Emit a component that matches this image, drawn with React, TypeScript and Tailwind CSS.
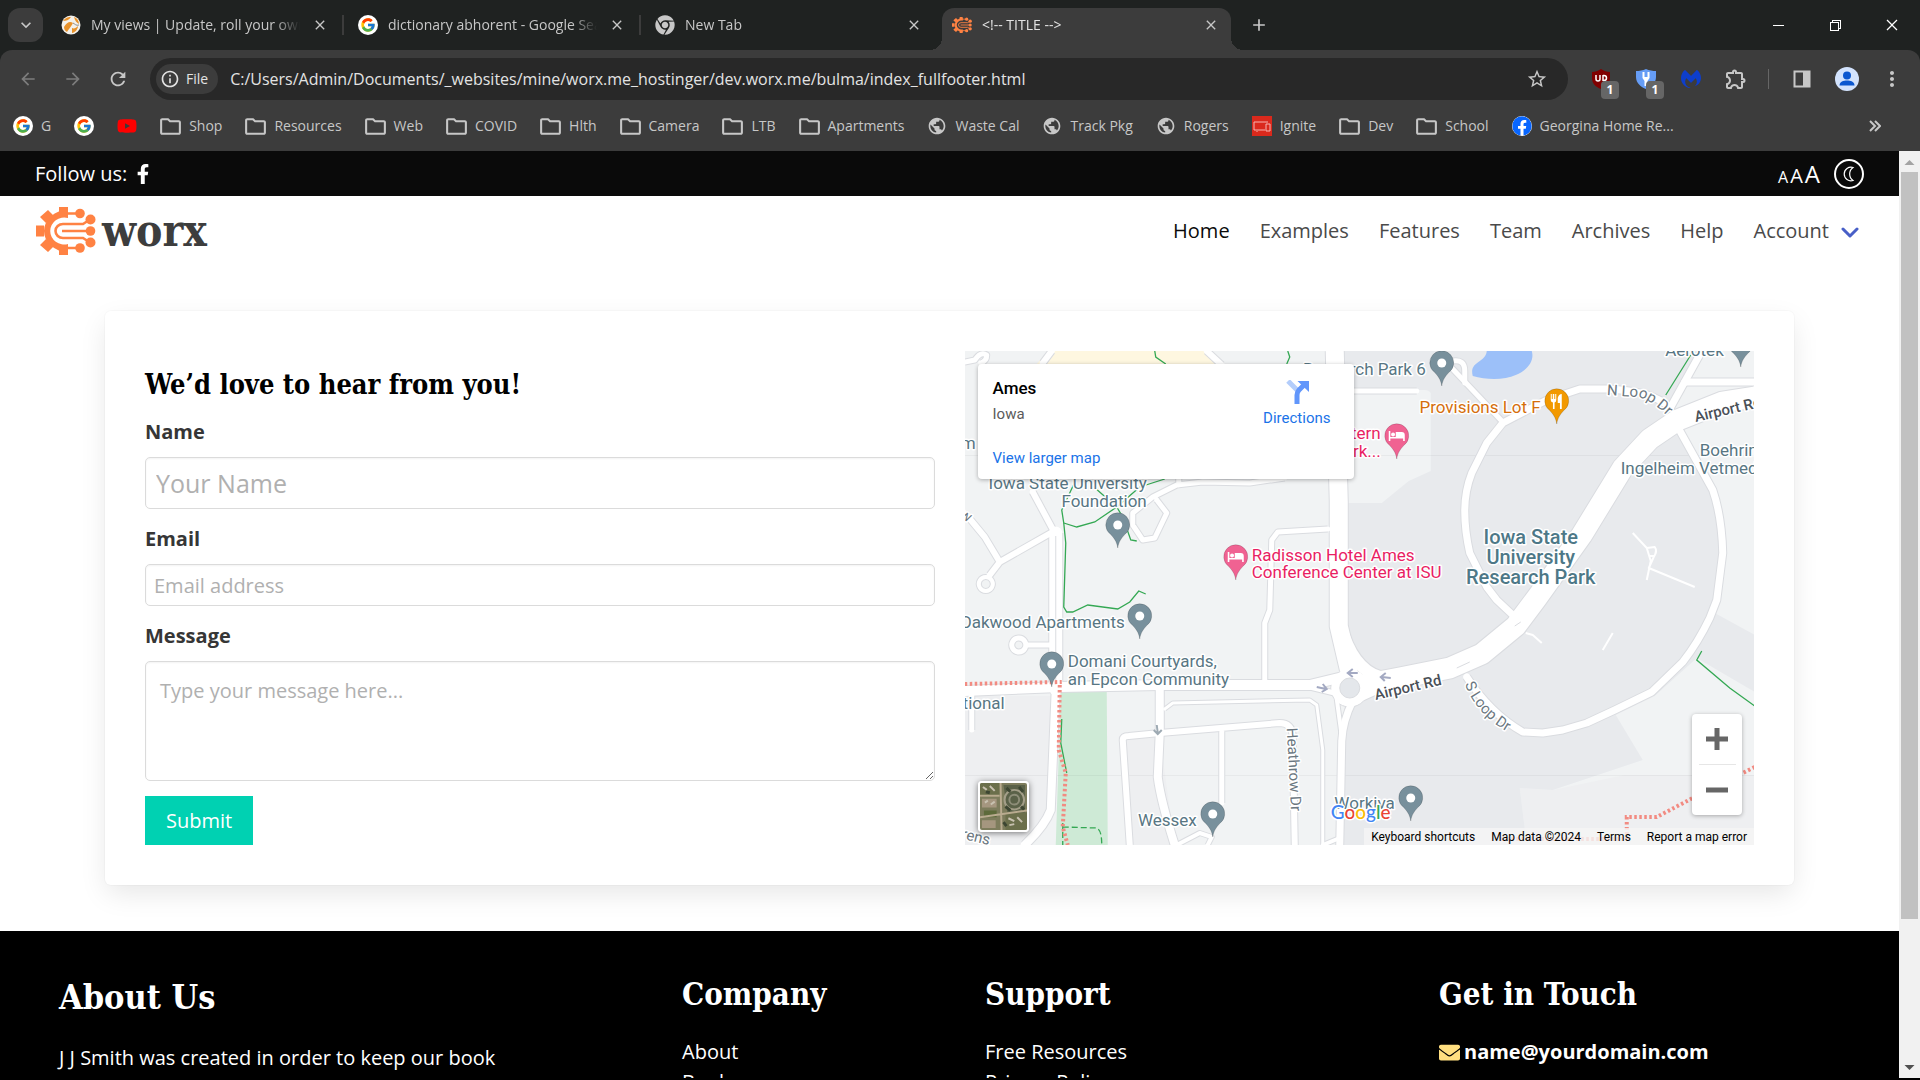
import type { ReactNode } from "react";
import {
  MdArrowBack,
  MdArrowForward,
  MdClose,
  MdExpandMore,
  MdInfoOutline,
  MdMoreVert,
  MdAdd,
  MdOutlineExtension,
  MdOutlineFolder,
  MdPublic,
  MdRefresh,
  MdStarOutline,
} from "react-icons/md";
import { FcGoogle } from "react-icons/fc";
import { FaChrome, FaEnvelope, FaFacebook, FaFacebookF, FaYoutube } from "react-icons/fa";
import { VscChromeClose, VscChromeMinimize, VscChromeRestore } from "react-icons/vsc";
import { SiMalwarebytes } from "react-icons/si";
import { clsx } from "clsx";

/* ---------- logos ---------- */

function GearLogo({ className }: { className?: string }) {
  return (
    <svg viewBox="0 0 60 48" className={className} fill="#ff8243" aria-hidden="true">
      <path d="M32 3A24 21 0 1 0 32 45V37A14 13.500 0 1 1 32 11Z" />
      <path d="M23 0h9v8h-9zM23 40h9v8h-9zM0 18.500h8v11H0z" />
      <path d="M4 10l8-7 6 6-8 7zM4 38l8 7 6-6-8-7z" />
      <g fill="none" stroke="#ff8243" strokeWidth="2.6">
        <path d="M30 6.500H44M30 41H44M26 24H54" />
        <path d="M54 12.500L47 17H27A7.500 7 0 0 0 27 31H47L54 35.500" />
      </g>
      <circle cx="44" cy="6.500" r="4.800" />
      <circle cx="44" cy="41" r="4.800" />
      <circle cx="54.500" cy="12.500" r="5" />
      <circle cx="54.500" cy="24" r="4.800" />
      <circle cx="54.500" cy="35.500" r="5" />
    </svg>
  );
}

function GoogleDot() {
  return (
    <span className="flex size-5 shrink-0 items-center justify-center rounded-full bg-white">
      <FcGoogle className="size-4" />
    </span>
  );
}

function BallIcon() {
  return (
    <svg viewBox="0 0 20 20" className="size-5 shrink-0">
      <circle cx="10" cy="10" r="9.500" fill="#f4f1ea" />
      <path d="M2 6c3-4 6-4 8-4-2 3-5 4-8 4zM3 12c3-5 6-6 9-4-2 4-5 7-6 9-2-1-3-3-3-5zM13 2c3 1 5 4 5 7-2-1-4-3-5-7zM11 13c2 1 4 0 6-2 0 3-3 7-6 7z" fill="#e8922a" />
      <path d="M12 8c2 1 3 3 6 2" stroke="#8b8b8b" fill="none" />
    </svg>
  );
}

/* ---------- browser window ---------- */

const TABS = [
  { title: "My views | Update, roll your own", icon: <BallIcon /> },
  { title: "dictionary abhorent - Google Search", icon: <GoogleDot /> },
  { title: "New Tab", icon: <FaChrome className="size-5 shrink-0 text-[#c7c7c7]" /> },
  { title: "<!-- TITLE -->", icon: <GearLogo className="h-4 w-5 shrink-0" />, active: true },
];

const FOOT =
  "absolute bottom-0 size-3 bg-[radial-gradient(circle_at_0_0,transparent_12px,#3c3c3c_12px)]";

function TabStrip() {
  return (
    <div className="flex h-[50px] shrink-0 items-center bg-[#1f2221] text-[#c7c7c7]">
      <button aria-label="Search tabs" className="ml-2 mr-1 flex h-[34px] w-[35px] items-center justify-center rounded-xl bg-[#3c3c3c]">
        <MdExpandMore className="size-5" />
      </button>
      {TABS.map((tab, i) => (
        <div
          key={tab.title}
          className={clsx(
            "relative flex h-full w-[297px] items-center",
            i < 2 && "after:absolute after:right-0 after:h-5 after:w-0.5 after:bg-[#3c3c3c]",
          )}
        >
          {tab.active && (
            <div className="absolute inset-x-1 bottom-0 top-2 rounded-t-xl bg-[#3c3c3c]">
              <span className={clsx(FOOT, "-left-3")} />
              <span className={clsx(FOOT, "-right-3 -scale-x-100")} />
            </div>
          )}
          <div className="relative flex w-full items-center gap-2.5 px-3.5">
            {tab.icon}
            <span
              className={clsx(
                "w-[210px] overflow-hidden whitespace-nowrap text-sm [mask-image:linear-gradient(to_right,black_88%,transparent)]",
                tab.active && "text-[#e3e3e3]",
              )}
            >
              {tab.title}
            </span>
            <button aria-label="Close tab" className="ml-auto flex size-5 shrink-0 items-center justify-center">
              <MdClose className="size-4" />
            </button>
          </div>
        </div>
      ))}
      <button aria-label="New tab" className="ml-3 flex size-6 items-center justify-center">
        <MdAdd className="size-5" />
      </button>
      <div className="ml-auto flex h-full text-white">
        <button aria-label="Minimize" className="flex w-[57px] items-center justify-center">
          <VscChromeMinimize className="size-4" />
        </button>
        <button aria-label="Restore" className="flex w-[57px] items-center justify-center">
          <VscChromeRestore className="size-4" />
        </button>
        <button aria-label="Close" className="flex w-[57px] items-center justify-center">
          <VscChromeClose className="size-4" />
        </button>
      </div>
    </div>
  );
}

function ToolButton({ label, children }: { label: string; children: ReactNode }) {
  return (
    <button aria-label={label} className="relative flex h-10 w-[45px] items-center justify-center">
      {children}
    </button>
  );
}

function CountBadge() {
  return (
    <span className="absolute bottom-0 right-1 flex h-[18px] w-[18px] items-center justify-center rounded bg-[#666] text-xs font-bold text-white">
      1
    </span>
  );
}

function Toolbar() {
  return (
    <div className="shrink-0 bg-[#1f2221]">
      <div className="flex h-[58px] items-center rounded-t-xl bg-[#3c3c3c] pl-[5px] pr-1.5 text-[#c7c7c7]">
        <ToolButton label="Back">
          <MdArrowBack className="size-5 text-[#7c7c7c]" />
        </ToolButton>
        <ToolButton label="Forward">
          <MdArrowForward className="size-5 text-[#7c7c7c]" />
        </ToolButton>
        <ToolButton label="Reload">
          <MdRefresh className="size-[22px]" />
        </ToolButton>
        <div className="ml-2.5 flex h-[42px] min-w-0 flex-1 items-center rounded-full bg-[#282828] pl-1.5 pr-5">
          <span className="flex h-[30px] items-center gap-1.5 rounded-full bg-[#3c3c3c] pl-1 pr-2.5 text-sm font-medium text-[#e3e3e3]">
            <MdInfoOutline className="size-5" />
            File
          </span>
          <input
            aria-label="Address"
            className="ml-3 min-w-0 flex-1 bg-transparent text-base text-[#e3e3e3] outline-none"
            defaultValue="C:/Users/Admin/Documents/_websites/mine/worx.me_hostinger/dev.worx.me/bulma/index_fullfooter.html"
          />
          <button aria-label="Bookmark this page">
            <MdStarOutline className="size-[22px]" />
          </button>
        </div>
        <div className="ml-2.5 flex items-center">
          <ToolButton label="uBlock Origin">
            <svg viewBox="0 0 20 20" className="size-5">
              <path d="M10 0c3 2 6 3 9 3v6c0 6-4 9-9 11C5 18 1 15 1 9V3c3 0 6-1 9-3z" fill="#800000" />
              <path d="M5 6v4a2 2 0 0 0 4 0V6M12 12V6M12 6.500h1a2.500 2.500 0 0 1 0 5h-1" fill="none" stroke="#fff" strokeWidth="1.500" />
            </svg>
            <CountBadge />
          </ToolButton>
          <ToolButton label="Privacy shield">
            <svg viewBox="0 0 20 20" className="size-5">
              <path d="M10 0c3 1.500 7 2 10 2v6c0 6-5 10-10 12C5 18 0 14 0 8V2c3 0 7-.500 10-2z" fill="#669df6" />
              <path d="M6.500 3v6l2 3v5h3v-5l2-3V3h-2v5h-3V3z" fill="#fff" />
            </svg>
            <CountBadge />
          </ToolButton>
          <ToolButton label="Malwarebytes">
            <SiMalwarebytes className="size-5 text-[#0d3ecc]" />
          </ToolButton>
          <ToolButton label="Extensions">
            <MdOutlineExtension className="size-6" />
          </ToolButton>
          <span className="mx-2.5 h-5 w-px bg-[#666]" />
          <ToolButton label="Side panel">
            <svg viewBox="0 0 18 18" className="size-[18px]">
              <path d="M1.500 1.500h15v15h-15z" fill="none" stroke="currentColor" strokeWidth="2" />
              <path d="M10 1h7v16h-7z" fill="currentColor" />
            </svg>
          </ToolButton>
          <ToolButton label="Profile">
            <span className="flex size-6 items-center justify-center rounded-full bg-[#d3e3fd]">
              <svg viewBox="0 0 24 24" className="size-6" fill="#0b57d0">
                <circle cx="12" cy="8.500" r="4" />
                <path d="M4.500 18.500c0-4 4-5 7.500-5s7.500 1 7.500 5z" />
              </svg>
            </span>
          </ToolButton>
          <ToolButton label="Menu">
            <MdMoreVert className="size-6" />
          </ToolButton>
        </div>
      </div>
    </div>
  );
}

const folder = <MdOutlineFolder className="-mx-0.5 size-[25px] shrink-0" />;
const globe = <MdPublic className="size-5 shrink-0" />;

const BOOKMARKS: { label: string; icon: ReactNode }[] = [
  { label: "G", icon: <GoogleDot /> },
  { label: "", icon: <GoogleDot /> },
  { label: "", icon: <FaYoutube className="size-5 shrink-0 text-[#f00]" /> },
  { label: "Shop", icon: folder },
  { label: "Resources", icon: folder },
  { label: "Web", icon: folder },
  { label: "COVID", icon: folder },
  { label: "Hlth", icon: folder },
  { label: "Camera", icon: folder },
  { label: "LTB", icon: folder },
  { label: "Apartments", icon: folder },
  { label: "Waste Cal", icon: globe },
  { label: "Track Pkg", icon: globe },
  { label: "Rogers", icon: globe },
  {
    label: "Ignite",
    icon: (
      <svg viewBox="0 0 20 20" className="size-5 shrink-0">
        <path d="M0 0h20v20H0z" fill="#da291c" />
        <path d="M13 14H2V6h14M5 15v1M14 8h4v7h-4z" fill="none" stroke="#f5b5b0" />
      </svg>
    ),
  },
  { label: "Dev", icon: folder },
  { label: "School", icon: folder },
  { label: "Georgina Home Re...", icon: <FaFacebook className="size-5 shrink-0 rounded-full bg-white text-[#0866ff]" /> },
];

function BookmarkBar() {
  return (
    <nav className="flex h-[43px] shrink-0 items-start bg-[#3c3c3c] pl-[13px] pr-[39px] text-[#c7c7c7]">
      <div className="flex h-9 min-w-0 flex-1 items-center gap-[23px] overflow-hidden">
        {BOOKMARKS.map((b, i) => (
          <a key={i} href="#" aria-label={b.label || "Bookmark"} className="flex shrink-0 items-center gap-2 text-sm">
            {b.icon}
            {b.label && <span>{b.label}</span>}
          </a>
        ))}
      </div>
      <button aria-label="More bookmarks" className="flex h-9 items-center">
        <svg viewBox="0 0 12 12" className="size-3" fill="none" stroke="currentColor" strokeWidth="2">
          <path d="M1 1l5 5-5 5M6 1l5 5-5 5" />
        </svg>
      </button>
    </nav>
  );
}

/* ---------- map ---------- */

const ROADS: { d: string; w: number }[] = [
  { d: "M68 141L90 182", w: 6 },
  { d: "M91 182V338", w: 13 },
  { d: "M91 338L86 459Q80 475 60 494", w: 8 },
  { d: "M6 169L20 186L35 211L86 182M35 211L25 224", w: 6 },
  { d: "M21 226a7 7 0 1 0 .1 0z", w: 4 },
  { d: "M0 11L10 9Q16 0 22 4Q22 10 16 12", w: 5 },
  { d: "M78 12L87 0M242 0L257 14", w: 6 },
  { d: "M54 287a7 7 0 1 0 .1 0zM62 294H88", w: 5 },
  { d: "M7 342V379", w: 5 },
  { d: "M0 340L95 336L195 334H345L378 326", w: 10 },
  { d: "M345 336L378 344", w: 5 },
  { d: "M370 0L374 150V275L384 318", w: 18 },
  { d: "M376 275Q388 318 415 326", w: 12 },
  { d: "M392 346Q412 336 430 330", w: 12 },
  { d: "M398 334L435 327L485 317L517 303L551 275L572 247L617 184L658 117L685 88L713 69L758 51L790 46", w: 21 },
  { d: "M388 350Q378 370 377 390L375 494", w: 7 },
  { d: "M372 348L377 385", w: 4 },
  { d: "M705 57Q690 40 642 38H615L582 49L538 72L522 92L507 122Q500 140 500 160Q500 180 505 202L522 236L532 249L548 264", w: 7 },
  { d: "M713 76L748 139Q757 165 758 202L752 249L745 267Q733 292 718 311L687 341L650 359L622 372L598 379L578 382L558 381Q525 362 502 326", w: 7 },
  { d: "M487 17L538 71", w: 5 },
  { d: "M488 10Q500 8 500 20V32", w: 5 },
  { d: "M379 40H452", w: 5 },
  { d: "M720 31H790", w: 7 },
  { d: "M737 0L706 56", w: 7 },
  { d: "M363 178L313 181L307 189L305 259L300 272V332", w: 5 },
  { d: "M320 127L285 132L238 131L212 134L188 146L168 162V174L178 189L190 187L202 162L192 149M214 127V134", w: 5 },
  { d: "M195 339V382L193 426Q196 450 210 494", w: 8 },
  { d: "M165 494L158 389Q158 385 164 385L195 382L315 372Q327 372 328 385L330 494", w: 6 },
  { d: "M257 381V452", w: 5 },
  { d: "M212 494L235 482L247 486L243 494", w: 4 },
  { d: "M200 358L208 352L345 349L352 354L358 399V494", w: 3 },
  { d: "M358 494L375 487", w: 4 },
];

const TRAILS = [
  "M190 0L191 6L201 13",
  "M323 0L325 6L322 13",
  "M112 127L97 159L99 172L101 192L99 256L102 261L108 261L123 254L153 258L165 251L174 240L181 243",
  "M99 172L112 176L130 171L152 156L128 135",
  "M200 128L175 136L152 156L158 166L166 189L172 190",
  "M726 4L701 44",
  "M737 300L732 309L765 337L790 355",
  "M97 368L96 392L102 422",
];

type Kind = "place" | "hotel" | "food";

const PIN_FILL: Record<Kind, string> = { place: "#78909c", hotel: "#f06292", food: "#f29900" };

const PINS: { x: number; y: number; kind: Kind }[] = [
  { x: 153, y: 174, kind: "place" },
  { x: 271, y: 206, kind: "hotel" },
  { x: 477, y: 12, kind: "place" },
  { x: 592, y: 50, kind: "food" },
  { x: 432, y: 85, kind: "hotel" },
  { x: 776, y: -7, kind: "place" },
  { x: 175, y: 265, kind: "place" },
  { x: 87, y: 313, kind: "place" },
  { x: 248, y: 463, kind: "place" },
  { x: 446, y: 447, kind: "place" },
];

function Pin({ x, y, kind }: { x: number; y: number; kind: Kind }) {
  return (
    <g transform={`translate(${x} ${y})`}>
      <path
        d="M0 23C-1 16-4 13-7 9.500A12 12 0 1 1 7 9.500C4 13 1 16 0 23Z"
        fill={PIN_FILL[kind]}
        stroke="#000"
        strokeOpacity=".15"
      />
      {kind === "place" && <circle r="4.500" fill="#fff" />}
      {kind === "hotel" && (
        <path d="M-8-5h1.600v6H-1v-5h6q3 0 3 3v6H6.400v-2.500H-6.400V5H-8zM-3.700-3.500a2 2 0 1 1 0 4 2 2 0 0 1 0-4z" fill="#fff" />
      )}
      {kind === "food" && (
        <path d="M-6-7h1v5h1v-5h1.500v5h1v-5h1v6Q-.500 1-2.200 1.500V8h-1.600V1.500Q-6 1-6-1zM5-7V8H3.200V2H1v-5q1-4 4-4z" fill="#fff" />
      )}
    </g>
  );
}

const LABELS: { x: number; y: number; text: string; end?: boolean; fill?: string }[] = [
  { x: 182, y: 138, text: "Iowa State University", end: true },
  { x: 182, y: 156, text: "Foundation", end: true },
  { x: 461, y: 24, text: "Research Park 6", end: true },
  { x: 759, y: 5, text: "Aerotek", end: true },
  { x: 735, y: 105, text: "Boehringer" },
  { x: 656, y: 123, text: "Ingelheim Vetmedica" },
  { x: 160, y: 277, text: "Oakwood Apartments", end: true },
  { x: 103, y: 316, text: "Domani Courtyards," },
  { x: 103, y: 334, text: "an Epcon Community" },
  { x: 40, y: 358, text: "National", end: true },
  { x: 232, y: 475, text: "Wessex", end: true },
  { x: 430, y: 458, text: "Workiva", end: true },
  { x: 11, y: 98, text: "m", end: true },
  { x: 287, y: 210, text: "Radisson Hotel Ames", fill: "#e91e63" },
  { x: 287, y: 227, text: "Conference Center at ISU", fill: "#e91e63" },
  { x: 416, y: 88, text: "Western", end: true, fill: "#e91e63" },
  { x: 416, y: 106, text: "Park...", end: true, fill: "#e91e63" },
  { x: 576, y: 62, text: "Provisions Lot F", end: true, fill: "#d56e0c" },
];

const GOOGLE = [
  ["G", "#4285f4"],
  ["o", "#ea4335"],
  ["o", "#fbbc04"],
  ["g", "#4285f4"],
  ["l", "#34a853"],
  ["e", "#ea4335"],
];

function MapDrawing() {
  return (
    <svg
      viewBox="0 0 790 494"
      preserveAspectRatio="xMidYMid slice"
      className="absolute inset-0 size-full font-[Roboto,sans-serif]"
      role="img"
      aria-label="Map of Ames, Iowa"
    >
      <path d="M0 0H790V494H0z" fill="#f1f3f4" />
      <path d="M0 345H86V459L60 494H0zM160 385H195L210 494H165zM562 494L555 437L588 439L660 424H790V494z" fill="#eeeff1" />
      <path
        d="M378 0H732L706 56L715 77L750 150L757 210L750 262L790 284V341L732 307L690 345L651 364L678 409L588 439L555 437L562 494H376L380 350L376 152H417L444 130L466 120V42Q464 39 460 39H378z"
        fill="#e8eaed"
      />
      <path d="M83 0H240L252 13H72z" fill="#fef7e0" />
      <path d="M522 0C521 12 504 10 508 25C522 29 540 29 551 24C563 19 570 10 567 0z" fill="#9cc0f9" />
      <path d="M96 341H142L143 494H91z" fill="#ceead6" />
      <path d="M0 104.500H790M0 424.500H790" stroke="#000" strokeOpacity=".04" />

      <g fill="none" stroke="#dadce0" strokeLinejoin="round">
        {ROADS.map((r) => (
          <path key={r.d} d={r.d} strokeWidth={r.w + 2} />
        ))}
        <circle cx="385" cy="337" r="19" fill="#fff" />
      </g>
      <g fill="none" stroke="#fff" strokeLinejoin="round">
        {ROADS.map((r) => (
          <path key={r.d} d={r.d} strokeWidth={r.w} strokeLinecap="round" />
        ))}
        <path
          d="M668 182L682 197L690 196Q693 200 689 206L684 217L730 236M682 197L686 210L682 229M684 205H690M561 282L568 284L577 292M648 282L638 299"
          strokeWidth="2"
        />
      </g>
      <circle cx="385" cy="337" r="18" fill="#fff" />
      <circle cx="385" cy="337" r="10" fill="#e4e7eb" stroke="#dadce0" />
      <path d="M91 185V330" stroke="#dadce0" />
      <path d="M492 317L505 311M550 275L556 271" stroke="#dadce0" />

      <g fill="none" stroke="#34a853" strokeWidth="1.300">
        {TRAILS.map((d) => (
          <path key={d} d={d} />
        ))}
        <path d="M98 476L132 477Q137 479 137 494M98 472V494" strokeDasharray="6 3" />
      </g>
      <g fill="none" stroke="#f28b82" strokeWidth="4" strokeDasharray="2.500 2.500">
        <path d="M0 333L97 331" />
        <path d="M95 334L94 399L101 422L98 476L103 494" />
        <path d="M790 416L728 447L692 466H662V488H534" />
      </g>

      <g fill="none" stroke="#a3a9c2" strokeWidth="2">
        <path d="M393 322H384M388 318L383 322L388 326" />
        <path d="M352 336L361 338M358 333L362 338L357 341" />
        <path d="M426 327L417 326M421 322L416 326L420 330" />
        <path d="M192 374L193 382M189 379L193 383L197 379" stroke="#9eaab3" />
      </g>

      {PINS.map((p) => (
        <Pin key={`${p.x}-${p.y}`} {...p} />
      ))}

      <g stroke="#fff" strokeWidth="3" strokeLinejoin="round" paintOrder="stroke">
        <g fontSize="17" fill="#587683">
          {LABELS.map((l) => (
            <text key={l.text} x={l.x} y={l.y} fill={l.fill} textAnchor={l.end ? "end" : "start"}>
              {l.text}
            </text>
          ))}
        </g>
        <g fontSize="20" fontWeight="500" fill="#4d7887" textAnchor="middle">
          <text x="566" y="193">Iowa State</text>
          <text x="566" y="213">University</text>
          <text x="566" y="233">Research Park</text>
        </g>
        <g fontSize="15" fill="#6b7780">
          <path id="n-loop" d="M642 44L674 46Q688 50 708 70" fill="none" stroke="none" />
          <path id="s-loop" d="M500 333Q512 366 552 386" fill="none" stroke="none" />
          <text><textPath href="#n-loop">N Loop Dr</textPath></text>
          <text><textPath href="#s-loop">S Loop Dr</textPath></text>
          <text transform="translate(322 377) rotate(87)">Heathrow Dr</text>
          <text transform="translate(-9 486) rotate(14)">rrens</text>
          <text transform="translate(-6 166) rotate(30)">w</text>
        </g>
        <g fontSize="15" fontWeight="500" fill="#4a5058">
          <text transform="translate(411 349) rotate(-13)">Airport Rd</text>
          <text transform="translate(731 71) rotate(-13)">Airport Rd</text>
        </g>
        <text x="366" y="468" fontSize="19" fontWeight="500" className="font-[Lato,sans-serif]">
          {GOOGLE.map(([c, fill], i) => (
            <tspan key={i} fill={fill}>{c}</tspan>
          ))}
        </text>
      </g>
    </svg>
  );
}

function SatelliteThumb() {
  return (
    <svg viewBox="0 0 48 48" className="size-full">
      <path d="M0 0h48v48H0z" fill="#7d7c5c" />
      <path d="M0 0h20v14H0zM26 30h22v18H26z" fill="#6b6f4b" />
      <path d="M24 2h22v28H28z" fill="#5a6148" />
      <path d="M2 16h15v9H2zM2 38h14v8H2z" fill="#a5967f" />
      <path d="M4 28h13v7H4z" fill="#5d6a3a" />
      <path d="M21 0L22 48M0 35L48 28M0 13H20" stroke="#b9ab8f" strokeWidth="2" />
      <circle cx="35" cy="17" r="10" fill="none" stroke="#a39e88" strokeWidth="2" />
      <circle cx="35" cy="17" r="5" fill="none" stroke="#8d8d78" strokeWidth="2" />
      <path d="M3 4l4 3M10 3l5 5M5 20l3-2M11 22l4-3M29 36l6 3M38 35l5 5M30 43l5-1" stroke="#c8c1b0" strokeWidth="2" />
      <path d="M27 5l4 4M40 4l4 5M26 24l5 4M42 24l3 3M6 9l4 1M24 40l3 4" stroke="#3d4632" strokeWidth="3" />
    </svg>
  );
}

function MapPanel() {
  return (
    <div className="relative min-h-[494px] overflow-hidden bg-[#f1f3f4] font-[Roboto,sans-serif]">
      <MapDrawing />
      <div className="absolute left-[13px] top-[13px] flex h-[115px] w-[376px] justify-between rounded-sm bg-white pl-[15px] pr-[23px] shadow-[0_1px_4px_rgba(0,0,0,0.3)]">
        <div className="flex flex-col items-start pt-3">
          <h3 className="text-[17px] font-medium leading-6 text-black">Ames</h3>
          <p className="mt-1 text-[15px] leading-5 text-[#5b5b5b]">Iowa</p>
          <a href="#" className="mt-6 text-[15px] leading-5 text-[#1a73e8]">View larger map</a>
        </div>
        <a href="#" className="flex flex-col items-center pt-4 text-[15px] leading-5 text-[#1a73e8]">
          <svg viewBox="0 0 24 24" className="mb-1 size-6">
            <path d="M3 1L12 10" stroke="#b3cdfb" strokeWidth="5" />
            <path d="M12 24V15Q12 12 14 10L19 5" fill="none" stroke="#6196fb" strokeWidth="5" />
            <path d="M12.500 1H24V12z" fill="#6196fb" />
          </svg>
          Directions
        </a>
      </div>
      <button
        aria-label="Show satellite imagery"
        className="absolute bottom-[13px] left-[13px] size-[51px] overflow-hidden rounded-sm border-2 border-white shadow-[0_1px_6px_rgba(0,0,0,0.5)]"
      >
        <SatelliteThumb />
      </button>
      <div className="absolute bottom-[30px] right-3 flex w-[50px] flex-col items-center rounded-sm bg-white shadow-[0_1px_4px_rgba(0,0,0,0.3)]">
        <button aria-label="Zoom in" className="flex size-[50px] items-center justify-center">
          <svg viewBox="0 0 22 22" className="size-[22px]">
            <path d="M11 0V22M0 11H22" stroke="#666" strokeWidth="5" />
          </svg>
        </button>
        <span className="h-px w-[37px] bg-[#e6e6e6]" />
        <button aria-label="Zoom out" className="flex size-[50px] items-center justify-center">
          <svg viewBox="0 0 22 22" className="size-[22px]">
            <path d="M0 11H22" stroke="#666" strokeWidth="5" />
          </svg>
        </button>
      </div>
      <div className="absolute bottom-0 right-0 flex h-[17px] items-center gap-4 bg-[#f5f5f5]/80 px-[7px] text-xs leading-4 text-black">
        <button>Keyboard shortcuts</button>
        <span>Map data ©2024</span>
        <a href="#">Terms</a>
        <a href="#">Report a map error</a>
      </div>
    </div>
  );
}

/* ---------- page ---------- */

const SERIF = "font-['DejaVu_Serif_Condensed','DejaVu_Serif',serif] font-bold";

const NAV = ["Home", "Examples", "Features", "Team", "Archives", "Help"];

function TopBar() {
  return (
    <div className="flex h-[45px] shrink-0 items-center justify-between bg-[#0a0a0a] px-[35px] text-white">
      <div className="flex items-center gap-1.5">
        <span>Follow us:</span>
        <a href="#" aria-label="Facebook">
          <FaFacebookF className="size-5" />
        </a>
      </div>
      <div className="flex items-center">
        <div className="mr-3.5 flex items-baseline gap-0.5">
          <button className="text-base">A</button>
          <button className="text-xl">A</button>
          <button className="text-2xl">A</button>
        </div>
        <button aria-label="Dark mode" className="flex size-[30px] items-center justify-center rounded-full border-2 border-white">
          <svg viewBox="0 0 16 16" className="size-4" fill="none" stroke="#fff" strokeWidth="1.200">
            <path d="M12 1.500A6.800 6.800 0 1 0 12 14.500A8 8 0 0 1 12 1.500Z" />
          </svg>
        </button>
      </div>
    </div>
  );
}

function NavBar() {
  return (
    <header className="flex h-[70px] shrink-0 items-center justify-between bg-white pl-9 pr-10">
      <a href="#" className="flex items-center gap-1.5">
        <GearLogo className="h-12 w-[60px]" />
        <span className={clsx(SERIF, "text-[44px] leading-none text-[#3d3d3d]")}>worx</span>
      </a>
      <nav className="flex items-center gap-[30px] text-[#4a4a4a]">
        {NAV.map((n, i) => (
          <a key={n} href="#" className={clsx(i === 0 && "text-[#0a0a0a]")}>
            {n}
          </a>
        ))}
        <a href="#" className="flex items-center gap-3">
          Account
          <svg viewBox="0 0 18 12" className="mt-1 h-3 w-[18px]" fill="none" stroke="#485fc7" strokeWidth="3">
            <path d="M2 2L9 9L16 2" strokeLinecap="round" strokeLinejoin="round" />
          </svg>
        </a>
      </nav>
    </header>
  );
}

const FIELD =
  "block w-full rounded-[5px] border border-[#dbdbdb] bg-white text-[#363636] shadow-[inset_0_1px_2px_rgba(10,10,10,0.05)] outline-none placeholder:text-[#b0b0b0]";

function ContactForm() {
  return (
    <form className="flex flex-col pt-3" onSubmit={(e) => e.preventDefault()}>
      <h2 className={clsx(SERIF, "mb-2.5 text-[27px] leading-[44px] text-black")}>We’d love to hear from you!</h2>
      <label htmlFor="name" className="mb-2.5 font-bold text-[#363636]">Name</label>
      <input id="name" type="text" placeholder="Your Name" className={clsx(FIELD, "mb-[15px] h-[52px] px-2.5 text-[25px]")} />
      <label htmlFor="email" className="mb-2.5 font-bold text-[#363636]">Email</label>
      <input id="email" type="email" placeholder="Email address" className={clsx(FIELD, "mb-[15px] h-[42px] px-2 text-xl")} />
      <label htmlFor="message" className="mb-2.5 font-bold text-[#363636]">Message</label>
      <textarea
        id="message"
        placeholder="Type your message here..."
        className={clsx(FIELD, "mb-[15px] h-[120px] resize-y p-3.5 text-xl leading-[30px]")}
      />
      <button type="submit" className="h-[49px] self-start bg-[#00d1b2] px-[21px] text-white">Submit</button>
    </form>
  );
}

const LINKS = [
  { title: "Company", links: ["About", "Books"] },
  { title: "Support", links: ["Free Resources", "Privacy Policy"] },
];

function Footer() {
  return (
    <footer className="grid flex-1 grid-cols-[623fr_303fr_454fr_401fr] content-start bg-black px-[59px] pt-9 text-white">
      <div>
        <h2 className={clsx(SERIF, "text-[34px] leading-[60px]")}>About Us</h2>
        <p className="mt-4">J J Smith was created in order to keep our book</p>
      </div>
      {LINKS.map((col) => (
        <div key={col.title}>
          <h3 className={clsx(SERIF, "text-[31px] leading-[54px]")}>{col.title}</h3>
          <ul className="mt-4">
            {col.links.map((l) => (
              <li key={l}>
                <a href="#">{l}</a>
              </li>
            ))}
          </ul>
        </div>
      ))}
      <div>
        <h3 className={clsx(SERIF, "text-[31px] leading-[54px]")}>Get in Touch</h3>
        <a href="#" className="mt-4 flex items-center gap-1 font-bold">
          <FaEnvelope className="size-[21px] text-[#ffdf80]" />
          name@yourdomain.com
        </a>
      </div>
    </footer>
  );
}

function ScrollBar() {
  return (
    <div className="flex w-[21px] shrink-0 flex-col items-center bg-[#f1f1f1]">
      <svg viewBox="0 0 21 21" className="size-[21px]"><path d="M5.500 14h10l-5-5z" fill="#a3a3a3" /></svg>
      <div className="w-[17px] flex-[747] bg-[#c1c1c1]" />
      <div className="flex-[138]" />
      <svg viewBox="0 0 21 21" className="size-[21px]"><path d="M5.500 8h10l-5 5z" fill="#505050" /></svg>
    </div>
  );
}

export default function App() {
  return (
    <div className="flex h-screen flex-col overflow-hidden border-b-2 border-black bg-white font-['Open_Sans','Noto_Sans',sans-serif]">
      <TabStrip />
      <Toolbar />
      <BookmarkBar />
      <div className="flex min-h-0 flex-1">
        <div className="flex min-w-0 flex-1 flex-col overflow-hidden text-xl leading-[30px]">
          <TopBar />
          <NavBar />
          <main className="shrink-0 px-[105px] pb-[46px] pt-[45px]">
            <section className="grid grid-cols-2 gap-[30px] rounded-md bg-white p-10 shadow-[0_10px_28px_-2px_rgba(10,10,10,0.1),0_0_0_1px_rgba(10,10,10,0.02)]">
              <ContactForm />
              <MapPanel />
            </section>
          </main>
          <Footer />
        </div>
        <ScrollBar />
      </div>
    </div>
  );
}
